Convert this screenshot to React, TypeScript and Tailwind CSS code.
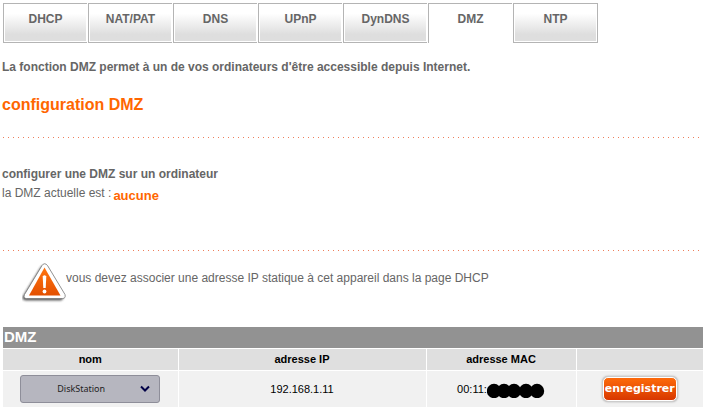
import React from 'react';

const tabs = ['DHCP', 'NAT/PAT', 'DNS', 'UPnP', 'DynDNS', 'DMZ', 'NTP'];
const activeTab = 'DMZ';

const devices = [{ name: 'DiskStation', ip: '192.168.1.11', mac: '00:11:' }];

const DottedLine: React.FC = () => (
  <hr className="mr-[3px] ml-px h-px border-0 bg-[repeating-linear-gradient(90deg,#ee7e5a_0px,#ee7e5a_1px,transparent_1px,transparent_5px)]" />
);

const WarningIcon: React.FC = () => (
  <svg className="h-10 w-11 shrink-0" viewBox="0 0 44 40" aria-hidden="true">
    <defs>
      <linearGradient id="warn" x1="0" y1="0" x2="0" y2="1">
        <stop offset="0" stopColor="#ff7410" />
        <stop offset="1" stopColor="#e45000" />
      </linearGradient>
      <filter id="warnShadow" x="-20%" y="-20%" width="140%" height="140%">
        <feGaussianBlur stdDeviation="1" />
      </filter>
    </defs>
    <path
      d="M18.5 4.5Q21.5 0 24.5 4.5L41 32Q42 37.500 38 37.500H4Q-1 37 1 33Z"
      fill="#333"
      opacity="0.8"
      filter="url(#warnShadow)"
    />
    <path
      d="M20 2.500Q22.500 -1 25.500 2.500L43 31.500Q44 35.500 40.500 35.500H4.500Q1 35.500 2.500 31.500Z"
      fill="#fff"
      stroke="#777"
      strokeWidth="0.800"
    />
    <path d="M22.500 4.500L38.500 32.500H7Z" fill="url(#warn)" />
    <path d="M20.700 13.500Q22.500 11 24.300 13.500L23.700 25H21.300Z" fill="#fff" />
    <circle cx="22.500" cy="28.500" r="1.900" fill="#fff" />
  </svg>
);

const App: React.FC = () => {
  return (
    <div className="bg-white pt-[3px] pr-[3px] pl-0.5 font-['Liberation_Sans',Arial,sans-serif] text-xs text-[#666]">
      {/* Tabs */}
      <nav className="ml-px flex gap-px">
        {tabs.map((tab) => (
          <a
            key={tab}
            href="#"
            className={`h-10 w-[84px] border-t border-l border-[#b4b4b4] text-center font-bold leading-[30px] last:w-[85px] last:border-r ${
              tab === activeTab
                ? 'bg-white'
                : 'border-b bg-linear-to-b from-white from-25% via-[#dedede] via-80% to-[#dedede] shadow-[inset_-1px_-1px_0_#fff,inset_1px_0_0_#fff]'
            }`}
          >
            {tab}
          </a>
        ))}
      </nav>

      <p className="mt-4 font-bold">La fonction DMZ permet à un de vos ordinateurs d'être accessible depuis Internet.</p>
      <h1 className="mt-[18px] mb-5 text-base font-bold text-[#ff6600]">configuration DMZ</h1>
      <DottedLine />

      {/* Current DMZ */}
      <section className="pt-7 pb-[46px]">
        <h2 className="font-bold">configurer une DMZ sur un ordinateur</h2>
        <div className="mt-[3px] flex items-start gap-0.5">
          <p>la DMZ actuelle est :</p>
          <strong className="pt-[3px] text-[13px] leading-4 text-[#ff6600]">aucune</strong>
        </div>
      </section>
      <DottedLine />

      <div className="mt-3 flex pl-5">
        <WarningIcon />
        <p className="pt-[7px]">vous devez associer une adresse IP statique à cet appareil dans la page DHCP</p>
      </div>

      {/* Devices */}
      <div className="mt-6 pl-px">
        <table className="w-full table-fixed border-collapse text-[11px] text-black">
          <caption className="h-[21px] bg-[#929292] pl-px text-left text-[15px] font-bold leading-5 text-white">DMZ</caption>
          <thead>
            <tr className="h-[22px] bg-[#dfdfdf]">
              <th scope="col" className="w-1/4 border-y border-r border-white">nom</th>
              <th scope="col" className="border-y border-r border-white">adresse IP</th>
              <th scope="col" className="w-[150px] border-y border-r border-white">adresse MAC</th>
              <td className="w-[127px] border-y border-white"></td>
            </tr>
          </thead>
          <tbody>
            {devices.map((device) => (
              <tr key={device.ip} className="h-9 bg-[#f1f1f1] text-center">
                <td className="border-r border-white">
                  <div className="relative mx-auto h-7 w-[140px]">
                    <select
                      aria-label="nom"
                      defaultValue={device.name}
                      className="block h-7 w-full appearance-none rounded-[3px] border border-[#8e8e99] bg-[#b6b6bf] pr-6 pl-9 font-['Noto_Sans',sans-serif] text-[9px] text-[#222]"
                    >
                      <option>{device.name}</option>
                    </select>
                    <svg className="pointer-events-none absolute top-2.5 right-2.5 h-2 w-2.5" viewBox="0 0 10 8" aria-hidden="true">
                      <path d="M1 1.500L5 5.500L9 1.500" fill="none" stroke="#000046" strokeWidth="2" />
                    </svg>
                  </div>
                </td>
                <td className="border-r border-white pt-0.5">{device.ip}</td>
                <td className="border-r border-white pt-0.5">
                  <div className="flex items-center justify-center">
                    {device.mac}
                    {/* hidden part of the address */}
                    <svg className="h-4 w-[58px]" viewBox="0 0 58 16" role="img" aria-label="masqué">
                      <circle cx="7" cy="9" r="7.200" />
                      <circle cx="17" cy="9" r="7.200" />
                      <circle cx="27" cy="9" r="7.200" />
                      <circle cx="39" cy="9" r="7.200" />
                      <circle cx="50" cy="9" r="7.200" />
                    </svg>
                  </div>
                </td>
                <td>
                  <button
                    type="button"
                    className="h-6 w-[74px] rounded-[5px] border border-white bg-linear-to-b from-[#ff6c0c] to-[#d63400] bg-origin-border pt-0.5 text-center align-middle font-['DejaVu_Sans',sans-serif] text-[11px] font-bold text-white shadow-[0_0_0_1px_#ccc,0_0_2px_1px_#aaa]"
                  >
                    enregistrer
                  </button>
                </td>
              </tr>
            ))}
          </tbody>
        </table>
      </div>
    </div>
  );
};

export default App;
